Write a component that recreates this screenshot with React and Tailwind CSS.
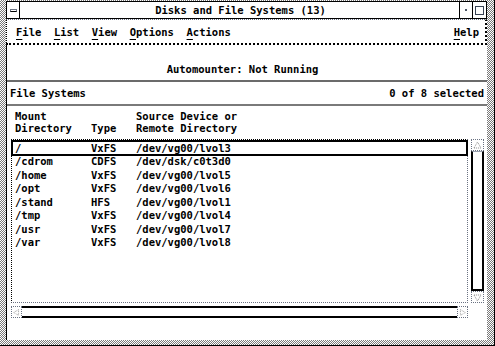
import React from "react";

const stipple =
  "bg-[image:repeating-conic-gradient(#7a7a7a_0%_25%,#fff_0%_50%)] bg-size-[2px_2px]";

const rows = [
  { dir: "/", type: "VxFS", src: "/dev/vg00/lvol3" },
  { dir: "/cdrom", type: "CDFS", src: "/dev/dsk/c0t3d0" },
  { dir: "/home", type: "VxFS", src: "/dev/vg00/lvol5" },
  { dir: "/opt", type: "VxFS", src: "/dev/vg00/lvol6" },
  { dir: "/stand", type: "HFS", src: "/dev/vg00/lvol1" },
  { dir: "/tmp", type: "VxFS", src: "/dev/vg00/lvol4" },
  { dir: "/usr", type: "VxFS", src: "/dev/vg00/lvol7" },
  { dir: "/var", type: "VxFS", src: "/dev/vg00/lvol8" },
];

const menus = ["File", "List", "View", "Options", "Actions"];

const Mnemonic = ({ label }) => (
  <span>
    <span className="underline underline-offset-[3px] decoration-1">
      {label[0]}
    </span>
    {label.slice(1)}
  </span>
);

const Arrow = ({ dir, className }) => {
  const pts = {
    up: "2,8 5.5,2 9,8",
    down: "2,3 5.5,9 9,3",
    left: "8,2 2,5.5 8,9",
    right: "3,2 9,5.5 3,9",
  }[dir];
  return (
    <div
      className={`flex items-center justify-center border border-dotted border-gray-500 bg-white ${className}`}
    >
      <svg width="11" height="11" viewBox="0 0 11 11">
        <polygon
          points={pts}
          fill="none"
          stroke="#8a8a8a"
          strokeWidth="1"
          strokeDasharray="1 1"
        />
      </svg>
    </div>
  );
};

const App = () => {
  return (
    <div
      className={`w-[495px] h-[346px] flex flex-col pl-[6px] pr-[7px] pt-[1px] pb-[5px] border-b border-r border-black text-black font-bold text-[10.5px] leading-[12px] ${stipple}`}
      style={{ fontFamily: '"DejaVu Sans Mono", "Liberation Mono", monospace' }}
    >
      {/* Title bar */}
      <div className="flex h-[18px] bg-white border border-black">
        <div className="w-[13px] border-r border-black flex items-center justify-center">
          <div className="w-[7px] h-[3px] border border-gray-500 border-b-black" />
        </div>
        <div className="flex-1 flex items-center justify-center pl-[2px]">
          Disks and File Systems (13)
        </div>
        <div className="w-[13px] border-l border-black flex items-center justify-center">
          <div className="w-[2px] h-[2px] bg-gray-600" />
        </div>
        <div className="w-[14px] border-l border-black flex items-center justify-center">
          <div className="w-[9px] h-[9px] border border-gray-700" />
        </div>
      </div>

      {/* Menu bar */}
      <div className="flex items-center h-[26px] bg-white border-t border-dotted border-gray-500 border-b-2 border-b-black border-r-2 border-r-black border-l border-l-black pl-[9px] pr-[6px]">
        <div className="flex gap-[12.6px]">
          {menus.map((m) => (
            <Mnemonic key={m} label={m} />
          ))}
        </div>
        <div className="ml-auto">
          <Mnemonic label="Help" />
        </div>
      </div>

      {/* Content */}
      <div className="flex-1 flex flex-col bg-white border-l border-black">
        <div className="h-[35px] pt-[18px] flex justify-center pr-[9px]">
          Automounter: Not Running
        </div>
        <div className="h-[2px] bg-[#6b6b6b]" />
        <div className="h-[22px] pb-[1px] flex items-center justify-between pl-[3px] pr-[3px]">
          <span>File Systems</span>
          <span>0 of 8 selected</span>
        </div>
        <div className="h-[2px] bg-[#7a7a7a]" />

        <div className="pt-[4px] pl-[8px] flex">
          <div className="w-[76px]">
            <div>Mount</div>
            <div>Directory</div>
          </div>
          <div className="w-[45px] pt-[12px]">Type</div>
          <div>
            <div>Source Device or</div>
            <div>Remote Directory</div>
          </div>
        </div>

        {/* List with vertical scrollbar */}
        <div className="mt-[5px] ml-[4px] mr-[3px] flex gap-[3px] h-[164px]">
          <div className="flex-1 border-t border-l border-black border-b border-r border-b-gray-500 border-r-gray-500 border-dotted pt-[1px]">
            {rows.map((r, i) => (
              <div
                key={r.dir}
                className={`h-[13.5px] flex items-center pl-[3px] ${
                  i === 0 ? "outline-2 outline-black outline-offset-[-1px]" : ""
                }`}
              >
                <span className="w-[76px]">{r.dir}</span>
                <span className="w-[45px]">{r.type}</span>
                <span>{r.src}</span>
              </div>
            ))}
          </div>
          <div className="w-[13px] flex flex-col">
            <Arrow dir="up" className="h-[12px]" />
            <div className="flex-1 border-l-2 border-r-2 border-b-2 border-black border-t border-t-gray-400 bg-white" />
            <Arrow dir="down" className="h-[12px]" />
          </div>
        </div>

        {/* Horizontal scrollbar */}
        <div className="mt-[3px] ml-[4px] mr-[19px] h-[12px] flex">
          <Arrow dir="left" className="w-[11px]" />
          <div className="flex-1 border-t-2 border-b-2 border-black" />
          <Arrow dir="right" className="w-[11px]" />
        </div>
      </div>
    </div>
  );
};

export default App;
